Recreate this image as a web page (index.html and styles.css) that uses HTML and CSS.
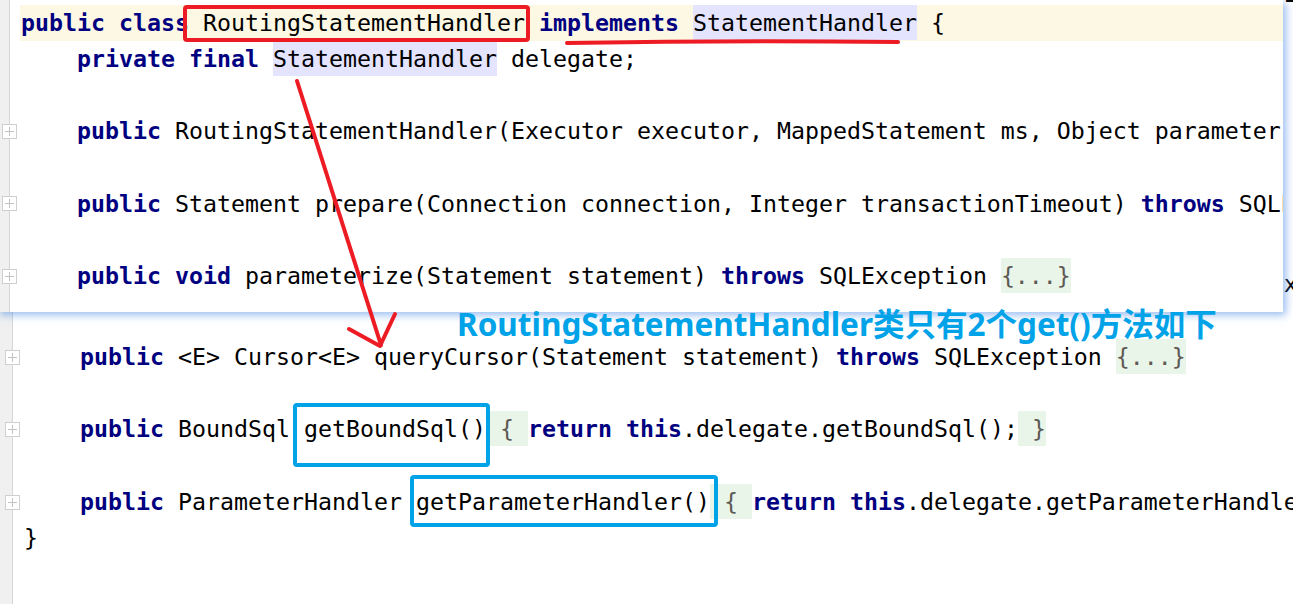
FILE: index.html
```html
<!DOCTYPE html>
<html lang="zh">
<head>
<meta charset="utf-8">
<title>RoutingStatementHandler</title>
<link rel="stylesheet" href="styles.css">
</head>
<body>
<div class="editor">
  <div class="gutter"></div>
  <div class="code editor-code">
    <div class="ln"><span class="fold"></span><span class="tx">    <span class="kw">public</span> Statement prepare(Connection connection, Integer transactionTimeout) <span class="kw">throws</span> SQLException <span class="fd">{...}</span></span></div>
    <div class="ln"><span class="fold none"></span><span class="tx"></span></div>
    <div class="ln"><span class="fold"></span><span class="tx">    <span class="kw">public void</span> parameterize(Statement statement) <span class="kw">throws</span> SQLException <span class="fd">{...}</span></span></div>
    <div class="ln"><span class="fold none"></span><span class="tx"></span></div>
    <div class="ln"><span class="fold"></span><span class="tx">    <span class="kw">public void</span> batch(Statement statement) <span class="kw">throws</span> SQLException <span class="fd">{...}</span></span></div>
    <div class="ln"><span class="fold none"></span><span class="tx"></span></div>
    <div class="ln"><span class="fold"></span><span class="tx">    <span class="kw">public int</span> update(Statement statement) <span class="kw">throws</span> SQLException <span class="fd">{...}</span></span></div>
    <div class="ln"><span class="fold none"></span><span class="tx"></span></div>
    <div class="ln"><span class="fold"></span><span class="tx">    <span class="kw">public</span> &lt;E&gt; List&lt;E&gt; query(Statement statement, ResultHandler resultHandler) <span class="kw">throws</span> SQLException <span class="fd">{...}</span></span></div>
    <div class="ln"><span class="fold none"></span><span class="tx"></span></div>
    <div class="ln"><span class="fold"></span><span class="tx">    <span class="kw">public</span> &lt;E&gt; Cursor&lt;E&gt; queryCursor(Statement statement) <span class="kw">throws</span> SQLException <span class="fd">{...}</span></span></div>
    <div class="ln"><span class="fold none"></span><span class="tx"></span></div>
    <div class="ln"><span class="fold"></span><span class="tx">    <span class="kw">public</span> BoundSql getBoundSql()<span class="fd"> { </span><span class="kw">return this</span>.delegate.getBoundSql();<span class="fd"> }</span></span></div>
    <div class="ln"><span class="fold none"></span><span class="tx"></span></div>
    <div class="ln"><span class="fold"></span><span class="tx">    <span class="kw">public</span> ParameterHandler getParameterHandler()<span class="fd"> { </span><span class="kw">return this</span>.delegate.getParameterHandler();<span class="fd"> }</span></span></div>
    <div class="ln"><span class="fold none"></span><span class="tx">}</span></div>
  </div>
</div>

<div class="popup">
  <div class="gutter"></div>
  <div class="code popup-code">
    <div class="ln cur"><span class="fold none"></span><span class="tx"><span class="kw">public class</span> RoutingStatementHandler <span class="kw">implements</span> <span class="ref">StatementHandler</span> {</span></div>
    <div class="ln"><span class="fold none"></span><span class="tx">    <span class="kw">private final</span> <span class="ref">StatementHandler</span> delegate;</span></div>
    <div class="ln"><span class="fold none"></span><span class="tx"></span></div>
    <div class="ln"><span class="fold"></span><span class="tx">    <span class="kw">public</span> RoutingStatementHandler(Executor executor, MappedStatement ms, Object parameter, RowBounds rowBounds, ResultHandler resultHandler, BoundSql boundSql) <span class="fd">{...}</span></span></div>
    <div class="ln"><span class="fold none"></span><span class="tx"></span></div>
    <div class="ln"><span class="fold"></span><span class="tx">    <span class="kw">public</span> Statement prepare(Connection connection, Integer transactionTimeout) <span class="kw">throws</span> SQLException <span class="fd">{...}</span></span></div>
    <div class="ln"><span class="fold none"></span><span class="tx"></span></div>
    <div class="ln"><span class="fold"></span><span class="tx">    <span class="kw">public void</span> parameterize(Statement statement) <span class="kw">throws</span> SQLException <span class="fd">{...}</span></span></div>
  </div>
</div>

<svg class="marks" width="1293" height="604" viewBox="0 0 1293 604" aria-hidden="true">
  <g fill="none" stroke-linecap="round" stroke-linejoin="round">
    <rect x="185" y="7" width="343" height="33" rx="2" stroke="#ed1c24" stroke-width="4"/>
    <path d="M567 43 Q 730 40 898 42" stroke="#ed1c24" stroke-width="4"/>
    <path d="M297 81 L381 345" stroke="#ed1c24" stroke-width="4"/>
    <path d="M349 329 L380 346 L395 314" stroke="#ed1c24" stroke-width="4"/>
    <rect x="295" y="405" width="193" height="60" rx="2" stroke="#00a2e8" stroke-width="4"/>
    <rect x="412" y="477" width="304" height="48" rx="2" stroke="#00a2e8" stroke-width="4"/>
  </g>
</svg>

<div class="note">RoutingStatementHandler类只有2个get()方法如下</div>
</body>
</html>
```

FILE: styles.css
```css
* { box-sizing: border-box; }

html, body { margin: 0; padding: 0; }

body {
  width: 1293px;
  height: 604px;
  overflow: hidden;
  position: relative;
  background: #ffffff;
  color: #000000;
  font-family: "DejaVu Sans Mono", monospace;
  font-size: 23.25px;
}

.editor {
  display: flex;
  height: 604px;
}

.gutter {
  flex: none;
  width: 13px;
  background: #f0f0f0;
  border-right: 1px solid #d6d6d6;
}

.code {
  flex: 1;
  min-width: 0;
}

.editor-code { margin-top: -23.6px; }

.ln {
  display: flex;
  align-items: center;
  height: 36.25px;
}

.fold {
  flex: none;
  position: relative;
  width: 15px;
  height: 15px;
  margin-left: -8px;
  border: 1px solid #cfcfcf;
  background: #ffffff;
}

.fold::before,
.fold::after {
  content: "";
  position: absolute;
  background: #c2c2c2;
}

.fold::before { left: 2px; right: 2px; top: 6px; height: 1px; }
.fold::after { top: 2px; bottom: 2px; left: 6px; width: 1px; }

.fold.none { visibility: hidden; }

.tx {
  flex: 1;
  min-width: 0;
  height: 36.25px;
  margin-left: 3px;
  padding-left: 1px;
  line-height: 36.25px;
  white-space: pre;
}

.cur .tx { background: #fdf8e4; }

.kw {
  font-weight: bold;
  color: #000080;
}

.ref {
  background: #e4e4ff;
  padding: 4px 0;
}

.fd {
  background: #e9f5e9;
  color: #5e5a56;
  padding: 4px 0;
}

.popup {
  position: absolute;
  left: -3px;
  top: 0;
  width: 1286px;
  height: 312px;
  display: flex;
  overflow: hidden;
  background: #ffffff;
  box-shadow: 3px 3px 8px rgba(70, 135, 230, 0.55);
}

.popup-code { padding-top: 4.5px; }

.marks {
  position: absolute;
  left: 0;
  top: 0;
}

.note {
  position: absolute;
  left: 457px;
  top: 308px;
  font-family: "Noto Sans", "Noto Sans CJK SC", sans-serif;
  font-weight: bold;
  font-size: 31.5px;
  line-height: 1;
  color: #00a2e8;
  white-space: nowrap;
}
```
